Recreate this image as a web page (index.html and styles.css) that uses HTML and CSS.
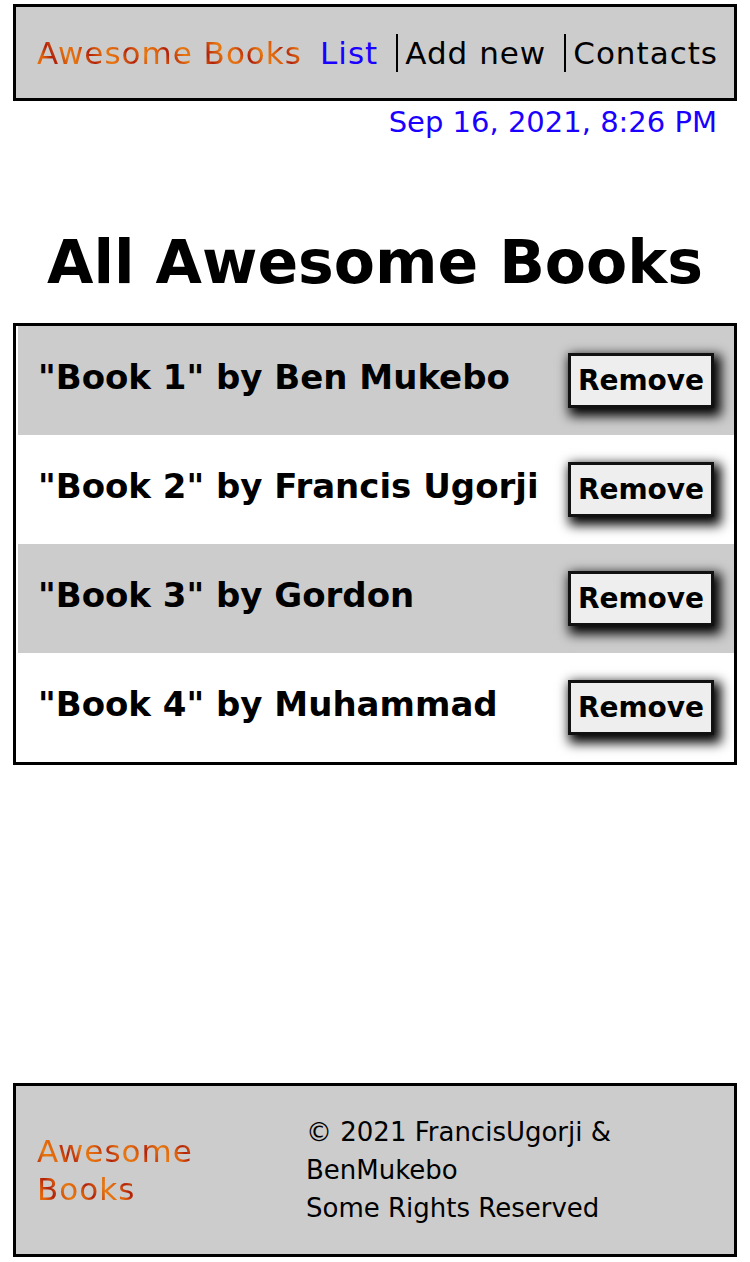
FILE: index.html
```html
<!DOCTYPE html>
<html lang="en">
<head>
    <meta charset="UTF-8">
    <meta name="viewport" content="width=device-width, initial-scale=1.0">
    <title>Awesome Books</title>
    <link rel="stylesheet" href="styles.css">
</head>
<body>
    <header class="site-header">
        <h2 class="logo">Awesome Books</h2>
        <nav>
            <ul class="nav-links">
                <li><a href="#list" class="active">List</a></li>
                <li class="sep"><a href="#add">Add new</a></li>
                <li class="sep"><a href="#contact">Contacts</a></li>
            </ul>
        </nav>
    </header>

    <p class="date">Sep 16, 2021, 8:26 PM</p>

    <main id="list">
        <h1>All Awesome Books</h1>
        <ul class="book-list">
            <li class="book"><p>"Book 1" by Ben Mukebo</p><button>Remove</button></li>
            <li class="book"><p>"Book 2" by Francis Ugorji</p><button>Remove</button></li>
            <li class="book"><p>"Book 3" by Gordon</p><button>Remove</button></li>
            <li class="book"><p>"Book 4" by Muhammad</p><button>Remove</button></li>
        </ul>
    </main>

    <footer class="site-footer">
        <h2 class="logo footer-logo">Awesome Books</h2>
        <p class="copy">&copy; 2021 FrancisUgorji &amp; BenMukebo<br>Some Rights Reserved</p>
    </footer>
</body>
</html>
```

FILE: styles.css
```css
body {
    font-family: "DejaVu Sans", Inter, sans-serif;
    margin: 4px 13px;
    color: #000;
    background: #fff;
}

.logo {
    margin: 0;
    font-size: 31px;
    font-weight: 400;
    letter-spacing: 1px;
    background: repeating-linear-gradient(60deg, #e8780f 0, #de600c 12px, #b0200a 20px, #cc4a0c 26px, #e8780f 34px);
    -webkit-background-clip: text;
    background-clip: text;
    color: transparent;
}

.site-header {
    display: flex;
    justify-content: space-between;
    align-items: center;
    height: 97px;
    box-sizing: border-box;
    padding: 0 16px 0 21px;
    border: 3px solid #000;
    background-color: #ccc;
}

.nav-links {
    display: flex;
    list-style: none;
    margin: 0;
    padding: 0;
    gap: 18px;
}

.nav-links li {
    font-size: 31px;
    letter-spacing: 1px;
    line-height: 38px;
}

.nav-links li.sep {
    border-left: 2px solid #000;
    padding-left: 7px;
}

.nav-links a {
    color: #000;
    text-decoration: none;
}

.nav-links a.active {
    color: #1a00ff;
}

.date {
    margin: 3px 0 0;
    padding-right: 20px;
    text-align: right;
    font-size: 29px;
    line-height: 36px;
    color: #1a00ff;
}

h1 {
    margin: 86px 0 25px;
    text-align: center;
    font-size: 60px;
    font-weight: 700;
    line-height: 72px;
}

.book-list {
    list-style: none;
    margin: 0;
    padding: 0 0 0 2px;
    border: 3px solid #000;
}

.book {
    display: flex;
    justify-content: space-between;
    align-items: center;
    padding: 27px 20px;
}

.book:nth-child(odd) {
    background-color: #ccc;
}

.book p {
    margin: 0 0 8px;
    font-size: 34px;
    font-weight: 700;
}

.book button {
    height: 55px;
    width: 146px;
    padding: 0;
    font-family: inherit;
    font-size: 28px;
    font-weight: 700;
    color: #000;
    background-color: #eee;
    border: 3px solid #111;
    box-shadow: 4px 5px 11px 3px #000;
    cursor: pointer;
}

.site-footer {
    display: flex;
    align-items: center;
    margin-top: 318px;
    height: 174px;
    box-sizing: border-box;
    padding: 0 20px 0 21px;
    border: 3px solid #000;
    background-color: #ccc;
}

.footer-logo {
    width: 240px;
    line-height: 38px;
    margin-right: 29px;
}

.copy {
    margin: 0;
    width: 330px;
    font-size: 26px;
    line-height: 38px;
}
```
